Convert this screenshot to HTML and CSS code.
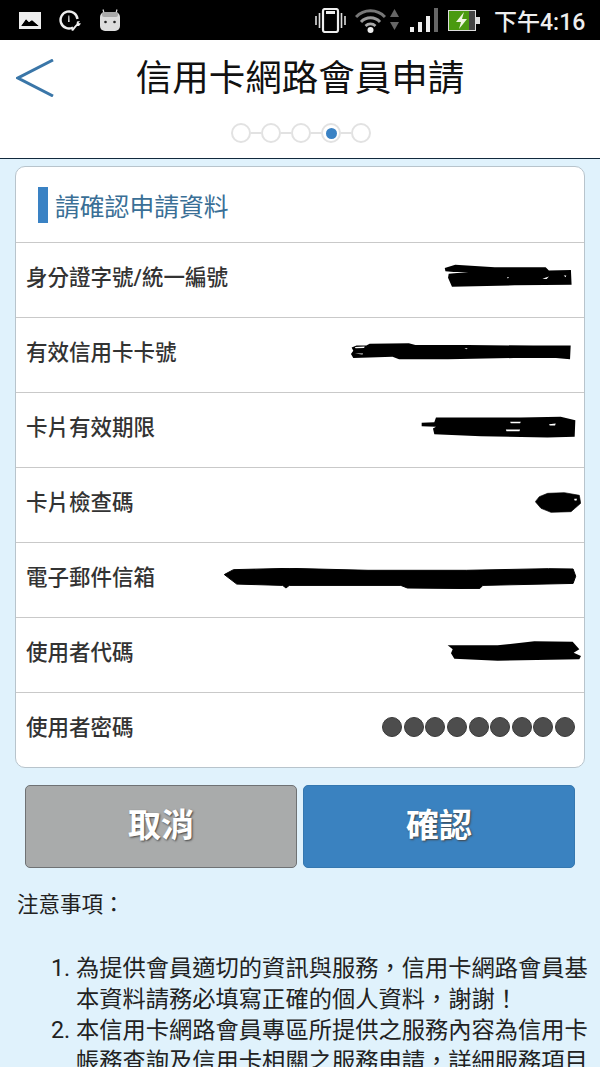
FILE: index.html
```html
<!DOCTYPE html>
<html lang="zh-TW">
<head>
    <meta charset="UTF-8">
    <meta name="viewport" content="width=device-width, initial-scale=1.0">
    <title>信用卡網路會員申請</title>
    <link rel="stylesheet" href="styles.css">
</head>
<body>
    <div class="status-bar">
        <svg class="ic-picture" viewBox="0 0 22 17">
            <rect width="22" height="17" fill="#eee"/>
            <path d="M2 14 L7 7 L10 10 L13 8 L20 14 Z" fill="#000"/>
            <path d="M2 14 V4 H20 V14 L13 8 L10 10 L7 7 Z" fill="#eee"/>
        </svg>
        <svg class="ic-gauge" viewBox="0 0 22 21">
            <path d="M14 17.5 A8.5 8.5 0 1 1 18.5 9" fill="none" stroke="#eee" stroke-width="2.4"/>
            <path d="M9.4 5.5 L10.3 5.5 L10.6 12 L9.1 12 Z" fill="#eee"/>
            <path d="M12 20 L17.5 14 L18 11.5 L21 11 L19.5 13 L22 13.5 L20 16 L18 16 L14 21 Z" fill="#eee"/>
        </svg>
        <svg class="ic-android" viewBox="0 0 20 22">
            <path d="M4 4 L3 0.5 M16 4 L17 0.5" stroke="#ddd" stroke-width="1.2"/>
            <rect y="3" width="20" height="19" rx="5" fill="#ddd"/>
            <rect x="2" y="3" width="16" height="5" rx="2" fill="#aaa"/>
            <circle cx="5.5" cy="13" r="1.3" fill="#222"/>
            <circle cx="14.5" cy="13" r="1.3" fill="#222"/>
        </svg>
        <span class="status-gap"></span>
        <svg class="ic-vibrate" viewBox="0 0 31 25">
            <rect x="8" y="1" width="15" height="23" rx="2" fill="none" stroke="#eee" stroke-width="2.2"/>
            <rect x="11" y="3" width="9" height="3" fill="#eee"/>
            <path d="M1 8 V17 M4.5 5 V20 M26.5 5 V20 M30 8 V17" stroke="#ddd" stroke-width="1.6"/>
        </svg>
        <svg class="ic-wifi" viewBox="0 0 31 25">
            <path d="M1 9 A20 20 0 0 1 30 9" fill="none" stroke="#777" stroke-width="3"/>
            <path d="M6 14 A13 13 0 0 1 25 14" fill="none" stroke="#999" stroke-width="3"/>
            <path d="M10.5 18 A7 7 0 0 1 20.5 18" fill="none" stroke="#aaa" stroke-width="2.6"/>
            <circle cx="15.5" cy="22" r="3" fill="#eee"/>
        </svg>
        <svg class="ic-arrows" viewBox="0 0 9 22">
            <path d="M4.5 0 L9 8 H0 Z M0 13 H9 L4.5 21 Z" fill="#666"/>
        </svg>
        <svg class="ic-signal" viewBox="0 0 28 24">
            <rect y="19" width="4" height="5" fill="#eee"/>
            <rect x="8" y="14" width="4" height="10" fill="#eee"/>
            <rect x="16" y="8" width="4" height="16" fill="#eee"/>
            <rect x="24" y="0" width="4" height="24" fill="#666"/>
        </svg>
        <svg class="ic-battery" viewBox="0 0 33 21">
            <rect x="0.5" y="0.5" width="27" height="20" fill="#4a9a10" stroke="#ddd"/>
            <rect x="21" y="1" width="6" height="19" fill="#444"/>
            <rect x="28" y="7" width="4" height="7" fill="#ddd"/>
            <path d="M16 2 L8 12 H13 L11 19 L19 9 H14 Z" fill="#eef5e0"/>
        </svg>
        <span class="status-time">下午4:16</span>
    </div>

    <div class="top-header">
        <div class="title-row">
            <svg class="back-arrow" viewBox="0 0 38 38">
                <polyline points="37,1 2,19 37,37" fill="none" stroke="#3a76a8" stroke-width="3"/>
            </svg>
            <h1>信用卡網路會員申請</h1>
        </div>
        <div class="stepper">
            <span class="step"></span>
            <span class="step-line"></span>
            <span class="step"></span>
            <span class="step-line"></span>
            <span class="step"></span>
            <span class="step-line"></span>
            <span class="step active"></span>
            <span class="step-line"></span>
            <span class="step"></span>
        </div>
    </div>

    <div class="main">
        <div class="card">
            <div class="card-title"><span class="title-bar"></span>請確認申請資料</div>
            <div class="row">
                <span class="row-label">身分證字號/統一編號</span>
                <svg class="mask mask-id" viewBox="428 70 388 70">
                    <path d="M428 82 L460 72 L580 80 L735 80 L745 90 L812 88 L814 133 L730 134 L640 135 L450 139 L438 112 L440 100 L500 94 L455 94 L430 92 Z" fill="#000"/>
                    <path d="M725 115 L745 108 L738 116 Z M790 105 L798 105 L796 110 Z M617 110 L624 110 L620 114 Z" fill="#fff"/>
                </svg>
            </div>
            <div class="row">
                <span class="row-label">有效信用卡卡號</span>
                <svg class="mask mask-card" viewBox="143 308 673 52">
                    <path d="M145 322 L160 316 L190 316 L200 310 L320 309 L340 314 L500 314 L700 316 L815 316 L813 358 L770 354 L640 354 L440 358 L290 358 L270 350 L200 352 L150 354 L143 342 L150 332 Z" fill="#000"/>
                    <path d="M155 320 L185 319 L183 323 L157 324 Z M155 340 L180 340 L178 343 Z M490 324 L500 324 L496 327 Z" fill="#fff"/>
                </svg>
            </div>
            <div class="row">
                <span class="row-label">卡片有效期限</span>
                <svg class="mask mask-date" viewBox="360 528 466 65">
                    <path d="M362 548 L400 546 L405 532 L660 532 L780 530 L824 540 L822 590 L740 592 L540 588 L400 582 L396 565 L405 560 L362 558 Z" fill="#000"/>
                    <path d="M628 545 L660 545 L658 549 L630 549 Z M615 568 L658 568 L656 573 L617 573 Z M745 552 L765 550 L763 556 L747 556 Z" fill="#fff"/>
                </svg>
            </div>
            <div class="row">
                <span class="row-label">卡片檢查碼</span>
                <svg class="mask mask-cvv" viewBox="702 757 138 61">
                    <path d="M703 785 L715 770 L740 760 L790 758 L835 766 L839 790 L810 815 L750 817 L720 805 Z" fill="#000" stroke="#000" stroke-width="2" stroke-linejoin="round"/>
                    <path d="M820 776 L828 776 L826 782 L820 781 Z" fill="#fff"/>
                </svg>
            </div>
            <div class="row">
                <span class="row-label">電子郵件信箱</span>
                <svg class="mask mask-mail" viewBox="60 85 1075 64">
                    <path d="M62 105 L90 90 L260 86 L500 92 L800 92 L1050 87 L1125 88 L1133 110 L1125 132 L850 138 L840 148 L620 146 L600 138 L260 138 L250 146 L240 138 L100 134 Z" fill="#000" stroke="#000" stroke-width="3" stroke-linejoin="round"/>
                </svg>
            </div>
            <div class="row">
                <span class="row-label">使用者代碼</span>
                <svg class="mask mask-user" viewBox="738 303 402 60">
                    <path d="M740 316 L890 316 L1000 304 L1115 305 L1135 328 L1118 338 L1140 348 L1135 358 L890 362 L760 356 L750 340 L755 328 Z" fill="#000"/>
                </svg>
            </div>
            <div class="row">
                <span class="row-label">使用者密碼</span>
                <div class="pw-dots">
                    <span></span><span></span><span></span><span></span><span></span><span></span><span></span><span></span><span></span>
                </div>
            </div>
        </div>

        <div class="buttons">
            <button class="btn btn-cancel">取消</button>
            <button class="btn btn-ok">確認</button>
        </div>

        <p class="notes-title">注意事項：</p>
        <ol class="notes">
            <li>為提供會員適切的資訊與服務，信用卡網路會員基本資料請務必填寫正確的個人資料，謝謝！</li>
            <li>本信用卡網路會員專區所提供之服務內容為信用卡帳務查詢及信用卡相關之服務申請，詳細服務項目</li>
        </ol>
    </div>
</body>
</html>
```

FILE: styles.css
```css
html, body {
    margin: 0;
    padding: 0;
}

body {
    width: 600px;
    height: 1067px;
    overflow: hidden;
    background: #e0f2fc;
    font-family: Roboto, 'Noto Sans CJK TC', sans-serif;
    color: #222;
}

/* status bar */
.status-bar {
    height: 40px;
    background: #000;
    display: flex;
    align-items: center;
    padding-left: 19px;
}

.status-bar svg {
    flex: none;
}

.ic-picture { width: 22px; height: 17px; margin-top: 1px; }
.ic-gauge { width: 22px; height: 21px; margin-left: 18px; }
.ic-android { width: 20px; height: 22px; margin-left: 19px; margin-top: -1px; }
.status-gap { flex: 1; }
.ic-vibrate { width: 31px; height: 25px; }
.ic-wifi { width: 31px; height: 25px; margin-left: 9px; }
.ic-arrows { width: 9px; height: 22px; margin-left: 4px; }
.ic-signal { width: 28px; height: 24px; margin-left: 11px; }
.ic-battery { width: 33px; height: 21px; margin-left: 10px; }

.status-time {
    margin-left: 13px;
    width: 106px;
    font-size: 23px;
    font-weight: 500;
    color: #eee;
    white-space: nowrap;
}

/* header */
.top-header {
    height: 118px;
    background: #fff;
    border-bottom: 1px solid #12293c;
}

.title-row {
    height: 76px;
    display: flex;
    align-items: center;
}

.back-arrow {
    width: 38px;
    height: 38px;
    margin-left: 16px;
    flex: none;
}

h1 {
    flex: 1;
    margin: 0 54px 5px 0;
    text-align: center;
    font-size: 36.5px;
    font-weight: 400;
    color: #111;
}

.stepper {
    display: flex;
    align-items: center;
    justify-content: center;
    height: 20px;
    margin: 7px 0 0 2px;
}

.step {
    width: 20px;
    height: 20px;
    box-sizing: border-box;
    border: 2px solid #e2e2e2;
    border-radius: 50%;
    background: #fff;
    display: flex;
    align-items: center;
    justify-content: center;
}

.step.active::after {
    content: '';
    width: 11px;
    height: 11px;
    border-radius: 50%;
    background: #3a82c4;
}

.step-line {
    width: 10px;
    height: 2px;
    background: #e2e2e2;
}

/* card */
.main {
    padding: 7px 15px 0;
}

.card {
    background: #fff;
    border: 1px solid #b8c4cc;
    border-radius: 10px;
    width: 568px;
}

.card-title {
    height: 75px;
    display: flex;
    align-items: center;
    padding-left: 22px;
    font-size: 24.8px;
    color: #3a6f96;
}

.title-bar {
    width: 10px;
    height: 36px;
    background: #3a82c4;
    margin-right: 7px;
}

.row {
    height: 74px;
    border-top: 1px solid #c9c9c9;
    display: flex;
    align-items: center;
    justify-content: space-between;
    padding-left: 10px;
}

.row-label {
    font-size: 21.5px;
    font-weight: 500;
    color: #333;
    margin-bottom: 10px;
}

/* 塗黑的資料 */
.mask {
    flex: none;
}

.mask-id { width: 129px; height: 23px; margin: 0 11px 9px 0; }
.mask-card { width: 224px; height: 17px; margin: 0 11px 7px 0; }
.mask-date { width: 155px; height: 22px; margin: 0 8px 6px 0; }
.mask-cvv { width: 46px; height: 21px; margin: 0 3px 5px 0; }
.mask-mail { width: 358px; height: 21px; margin: 0 5px 3px 0; }
.mask-user { width: 134px; height: 20px; margin: 0 3px 8px 0; }

.pw-dots {
    display: flex;
    gap: 1.6px;
    margin: 0 9px 6px 0;
}

.pw-dots span {
    width: 20px;
    height: 20px;
    box-sizing: border-box;
    border-radius: 50%;
    background: #4d4d4d;
    border: 1px solid #3a3a3a;
}

/* buttons */
.buttons {
    display: flex;
    gap: 6px;
    margin: 17px 0 0 10px;
    width: 550px;
}

.btn {
    flex: 1;
    height: 83px;
    border-radius: 5px;
    font-family: inherit;
    font-size: 33px;
    font-weight: 700;
    color: #fff;
    text-shadow: 1px 1px 2px #444;
    padding: 0 0 7px;
}

.btn-cancel {
    background: #a9abab;
    border: 1px solid #6f7274;
}

.btn-ok {
    background: #3a82c0;
    border: 1px solid #3578b0;
}

/* notes */
.notes-title {
    margin: 21px 0 0 2px;
    font-size: 21.5px;
    line-height: 31px;
    color: #222;
}

.notes {
    margin: 33px 0 0;
    padding: 0 0 0 61px;
    width: 513px;
    font-size: 23.27px;
    line-height: 31px;
    color: #222;
}
```
